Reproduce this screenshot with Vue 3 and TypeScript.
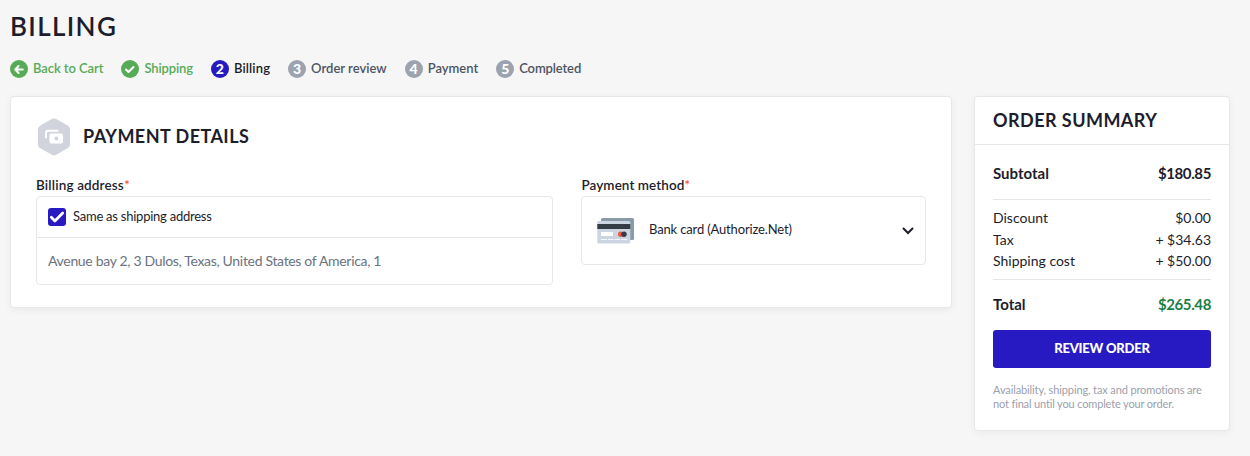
<script setup lang="ts">
import { ref } from 'vue'

type StepState = 'done' | 'active' | 'next'
interface Step {
  label: string
  state: StepState
  mark: string
}

const steps: Step[] = [
  { label: 'Back to Cart', state: 'done', mark: 'arrow' },
  { label: 'Shipping', state: 'done', mark: 'check' },
  { label: 'Billing', state: 'active', mark: '2' },
  { label: 'Order review', state: 'next', mark: '3' },
  { label: 'Payment', state: 'next', mark: '4' },
  { label: 'Completed', state: 'next', mark: '5' },
]

const costs = [
  { label: 'Discount', value: '$0.00' },
  { label: 'Tax', value: '+ $34.63' },
  { label: 'Shipping cost', value: '+ $50.00' },
]

const sameAddress = ref(true)
</script>

<template>
  <main class="page">
    <h1 class="title">BILLING</h1>
    <nav class="steps">
      <a v-for="(s, i) in steps" :key="s.label" class="step" :class="[s.state, 'step-' + i]">
        <span class="dot">
          <svg v-if="s.mark === 'arrow'" viewBox="0 0 18 18" width="18" height="18">
            <path d="M12.7 9.500H5.400M8.600 6.100L5.200 9.500l3.400 3.400" />
          </svg>
          <svg v-else-if="s.mark === 'check'" viewBox="0 0 18 18" width="18" height="18">
            <path d="M5 9.500l2.500 2.500 5-5" />
          </svg>
          <template v-else>{{ s.mark }}</template>
        </span>
        <span class="step-label">{{ s.label }}</span>
      </a>
    </nav>

    <div class="columns">
      <section class="card details">
        <header class="details-head">
          <svg class="hex" viewBox="0 0 34 38" width="34" height="38">
            <path
              d="M14.8 1.1Q17 0 19.200 1.100L31 7.700Q33 8.900 33 11.200V26.600Q33 28.900 31 30.100L19.200 36.700Q17 37.800 14.800 36.700L3 30.100Q1 28.900 1 26.600V11.200Q1 8.900 3 7.700Z"
              fill="#d1d4dc"
            />
            <path d="M9 19.500V15Q9 12.700 11.300 12.700H20.500" fill="none" stroke="#fff" stroke-width="2" stroke-linecap="round" />
            <path
              fill="#fff"
              fill-rule="evenodd"
              d="M14.500 15.500H24Q26 15.500 26 17.500V23.500Q26 25.500 24 25.500H14.500Q12.500 25.500 12.500 23.500V17.500Q12.500 15.500 14.500 15.500ZM19.300 18.500a2 2 0 1 0 0 4a2 2 0 1 0 0-4Z"
            />
          </svg>
          <h2>PAYMENT DETAILS</h2>
        </header>
        <div class="fields">
          <div class="address">
            <div class="label lb-address">Billing address<i>*</i></div>
            <div class="box">
              <label class="same">
                <input v-model="sameAddress" type="checkbox" />
                <span class="check">
                  <svg v-if="sameAddress" viewBox="0 0 18 18" width="18" height="18">
                    <path d="M3.300 9.300l3.600 3.600L14.700 5" />
                  </svg>
                </span>
                <span class="same-text">Same as shipping address</span>
              </label>
              <div class="full-address"><span>Avenue bay 2, 3 Dulos, Texas, United States of America, 1</span></div>
            </div>
          </div>
          <div class="method">
            <div class="label lb-method">Payment method<i>*</i></div>
            <div class="box select">
              <svg class="bank" viewBox="0 0 38 26" width="38" height="26">
                <rect x="4" y="0" width="33" height="22" rx="1.500" fill="#8a9ba8" />
                <rect x="0.300" y="3" width="33" height="22.500" rx="1.500" fill="#cbd5e2" />
                <rect x="0.300" y="6" width="33" height="5" fill="#343c46" />
                <rect x="4" y="14" width="12" height="4" fill="#fff" />
                <path d="M4 21.500h6M11 21.500h5.500M17.500 21.500h5.500M24 21.500h6" stroke="#f5f7fa" stroke-width="1" />
                <circle cx="23.700" cy="16.200" r="2.700" fill="#f0583f" />
                <circle cx="27" cy="16.200" r="2.700" fill="#343c46" />
              </svg>
              <span class="bank-text">Bank card (Authorize.Net)</span>
              <svg class="chevron" viewBox="0 0 12 8" width="12" height="8">
                <path d="M1.500 1.500L6 6l4.500-4.500" />
              </svg>
            </div>
          </div>
        </div>
      </section>

      <aside class="card summary">
        <h2>ORDER SUMMARY</h2>
        <div class="summary-body">
          <div class="row strong subtotal"><span>Subtotal</span><span class="sum">$180.85</span></div>
          <div class="costs">
            <div v-for="c in costs" :key="c.label" class="row"><span>{{ c.label }}</span><span>{{ c.value }}</span></div>
          </div>
          <div class="row strong total"><span>Total</span><span class="sum amount">$265.48</span></div>
          <button type="button"><span>REVIEW ORDER</span></button>
          <p class="note"><span>Availability, shipping, tax and promotions are</span><br /><span class="note-end">not final until you complete your order.</span></p>
        </div>
      </aside>
    </div>
  </main>
</template>

<style>
body {
  background: #f6f6f6;
}
</style>

<style scoped>
.page {
  box-sizing: border-box;
  height: 456px;
  padding: 9px 20px 0 10px;
  font-family: Lato, sans-serif;
  font-size: 13px;
  color: #1d1d2c;
  overflow: hidden;
}
.page * {
  box-sizing: border-box;
}
h1,
h2,
p {
  margin: 0;
}
.title {
  height: 34px;
  line-height: 34px;
  font-size: 26px;
  font-weight: 600;
  letter-spacing: 1.35px;
}
.steps {
  display: flex;
  height: 18px;
  margin-top: 17px;
}
.step {
  display: flex;
  align-items: center;
  gap: 5px;
  margin-right: 18px;
  font-weight: 600;
  line-height: 18px;
  letter-spacing: -0.13px;
  color: #4b5563;
  white-space: nowrap;
}
.step-0 {
  letter-spacing: -0.07px;
}
.step-2 {
  letter-spacing: 0.14px;
}
.step-3,
.step-4 {
  letter-spacing: 0.01px;
}
.step-label {
  padding-bottom: 2px;
}
.dot {
  width: 18px;
  height: 18px;
  border-radius: 50%;
  background: #9ca3af;
  color: #fff;
  font-size: 14px;
  font-weight: 900;
  line-height: 17px;
  letter-spacing: 0;
  text-align: center;
}
.dot svg {
  display: block;
  fill: none;
  stroke: #fff;
  stroke-width: 2.1;
  stroke-linecap: round;
  stroke-linejoin: round;
}
.done {
  color: #57ab57;
}
.done .dot {
  background: #57ab57;
}
.active {
  color: #1d1d2c;
}
.active .dot {
  background: #281ac2;
}
.columns {
  display: flex;
  align-items: flex-start;
  justify-content: space-between;
  margin-top: 18px;
}
.card {
  background: #fff;
  border: 1px solid #e5e7eb;
  border-radius: 4px;
  box-shadow: 0 2px 8px rgba(0, 0, 0, 0.05);
}
.details {
  width: 942px;
  height: 212px;
  padding: 21px 25px 0;
}
.details-head {
  display: flex;
  align-items: center;
  gap: 12px;
  height: 38px;
}
h2 {
  font-size: 18px;
  font-weight: 700;
  letter-spacing: 0.45px;
}
.details-head h2 {
  line-height: 36px;
  padding-bottom: 2px;
}
.hex {
  margin-left: 1px;
}
.fields {
  display: flex;
  justify-content: space-between;
  margin-top: 21px;
}
.address {
  width: 517px;
}
.method {
  width: 345px;
}
.label {
  height: 19px;
  line-height: 16px;
  font-size: 13.5px;
  font-weight: 600;
  letter-spacing: 0.15px;
}
.label i {
  font-size: 14px;
  font-style: normal;
  font-weight: 400;
  color: #f53d3d;
}
.lb-method {
  padding-left: 0.5px;
  letter-spacing: 0.06px;
}
.box {
  border: 1px solid #e5e7eb;
  border-radius: 4px;
}
.same {
  display: flex;
  align-items: center;
  gap: 7px;
  height: 41px;
  padding-left: 11px;
  border-bottom: 1px solid #e5e7eb;
}
.same-text {
  padding-bottom: 2px;
  letter-spacing: -0.24px;
}
.same input {
  position: absolute;
  opacity: 0;
}
.check {
  width: 18px;
  height: 18px;
  border-radius: 3px;
  background: #281ac2;
}
.check svg {
  display: block;
  fill: none;
  stroke: #fff;
  stroke-width: 2.8;
  stroke-linecap: round;
  stroke-linejoin: round;
}
.full-address {
  height: 46px;
  padding-left: 11px;
  line-height: 46px;
  font-size: 14px;
  letter-spacing: -0.32px;
  color: #6b7280;
}
.select {
  display: flex;
  align-items: center;
  height: 69px;
  padding: 0 11px 0 15px;
}
.bank-text {
  margin-left: 14px;
  padding-bottom: 3px;
  letter-spacing: -0.15px;
}
.chevron {
  margin-left: auto;
  fill: none;
  stroke: #1d1d2c;
  stroke-width: 2;
  stroke-linecap: round;
}
.summary {
  width: 256px;
  height: 335px;
}
.summary h2 {
  height: 48px;
  padding-left: 18px;
  line-height: 46px;
  border-bottom: 1px solid #e5e7eb;
}
.summary-body {
  padding: 17px 18px 0;
}
.row {
  display: flex;
  justify-content: space-between;
  line-height: 22px;
  font-size: 14px;
}
.strong {
  font-size: 15px;
  font-weight: 700;
}
.sum {
  letter-spacing: -0.38px;
}
.subtotal {
  padding-bottom: 15px;
  border-bottom: 1px solid #e5e7eb;
}
.costs {
  padding: 7px 0;
  border-bottom: 1px solid #e5e7eb;
}
.costs .row {
  line-height: 21.6px;
}
.total {
  margin-top: 13px;
}
.amount {
  color: #1c7f45;
}
button {
  display: block;
  width: 218px;
  height: 38px;
  margin-top: 15px;
  padding: 0 0 2px;
  border: 0;
  border-radius: 3px;
  background: #281ac2;
  color: #fff;
  font: 900 13px Lato, sans-serif;
  letter-spacing: -0.2px;
}
.note {
  margin-top: 15px;
  font-size: 11px;
  line-height: 14px;
  letter-spacing: -0.12px;
  color: #9ca0ab;
  white-space: nowrap;
}
.note-end {
  letter-spacing: -0.15px;
}
</style>
